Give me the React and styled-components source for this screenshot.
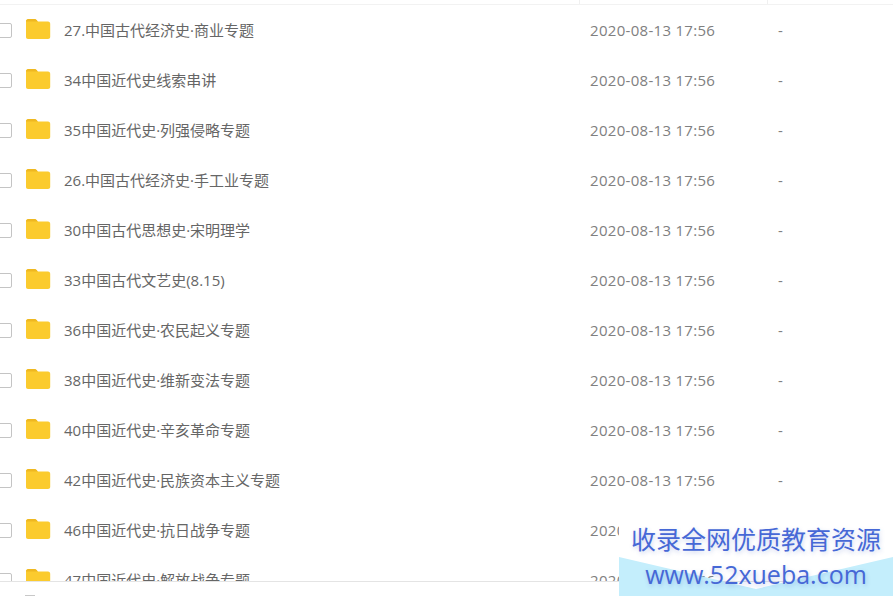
import React from "react";
import styled, { createGlobalStyle } from "styled-components";

const Global = createGlobalStyle`
  html, body { margin: 0; padding: 0; background: #fff; }
  #root { width: 893px; height: 596px; }
`;
const Page = styled.div`
  position: relative;
  width: 893px;
  height: 596px;
  overflow: hidden;
  background: #fff;
  font-family: "Open Sans", "Noto Sans CJK SC", sans-serif;
  font-size: 15px;
  color: #666;
`;
const Header = styled.div`
  height: 4px;
  display: grid;
  grid-template-columns: 580px 188px 1fr;
  border-bottom: 1px solid #f2f2f2;
`;
const HeaderCell = styled.div`
  border-right: 1px solid #f0f0f0;
  &:last-child { border-right: none; }
`;
const Row = styled.div`
  height: 50px;
  display: grid;
  grid-template-columns: 580px 188px 1fr;
  align-items: center;
`;
const NameCell = styled.div`
  display: flex;
  align-items: center;
  margin-left: -3px;
`;
const Check = styled.span`
  box-sizing: border-box;
  flex: none;
  width: 15px;
  height: 15px;
  border: 1px solid #c4c4c4;
  border-radius: 2px;
  background: #fff;
`;
const FolderIcon = styled.svg`
  flex: none;
  width: 26px;
  height: 22px;
  margin: -2px 0 0 13px;
`;
const Name = styled.span`
  margin-left: 13px;
  padding-bottom: 2px;
  color: #666;
  white-space: nowrap;
`;
const DateCell = styled.div`
  padding: 0 0 1px 10px;
  color: #808080;
  letter-spacing: 0.3px;
  white-space: nowrap;
`;
const SizeCell = styled.div`
  padding-left: 10px;
  color: #808080;
`;
const Footer = styled.div`
  position: absolute;
  left: 0;
  right: 0;
  top: 581px;
  bottom: 0;
  background: #fff;
  border-top: 1px solid #e4e4e4;
`;
const FooterMark = styled.span`
  position: absolute;
  left: 25px;
  bottom: 0;
  width: 10px;
  height: 1px;
  background: #c8c8c8;
`;
const Banner = styled.svg`
  position: absolute;
  left: 619px;
  top: 557px;
  width: 274px;
  height: 39px;
`;
const Stamp = styled.div`
  position: absolute;
  left: 619px;
  right: 0;
  top: 519px;
  text-align: center;
  color: #4668d6;
  text-shadow: 1px 2px 4px rgba(60, 90, 190, 0.25);
  font-family: "Noto Sans CJK SC", "Open Sans", sans-serif;
`;
const StampTitle = styled.div`
  font-size: 25px;
  line-height: 38px;
  background: #fff;
`;
const StampUrl = styled.div`
  font-family: "Open Sans", sans-serif;
  font-size: 25px;
  line-height: 34px;
`;

const names = [
  "27.中国古代经济史·商业专题",
  "34中国近代史线索串讲",
  "35中国近代史·列强侵略专题",
  "26.中国古代经济史·手工业专题",
  "30中国古代思想史·宋明理学",
  "33中国古代文艺史(8.15)",
  "36中国近代史·农民起义专题",
  "38中国近代史·维新变法专题",
  "40中国近代史·辛亥革命专题",
  "42中国近代史·民族资本主义专题",
  "46中国近代史·抗日战争专题",
  "47中国近代史·解放战争专题",
];

const Folder = () => (
  <FolderIcon viewBox="0 0 26 22">
    <path d="M1 3.5C1 2 2 1 3.500 1h6c.8 0 1.400.3 2 1l1.400 1.600H23c1.300 0 2.200 1 2.200 2.200V19c0 1.200-1 2-2.200 2H3c-1.200 0-2-.8-2-2Z" fill="#fbcb2e" />
    <path d="M1 3.500C1 2 2 1 3.500 1h6c.8 0 1.400.3 2 1l1.400 1.600H1Z" fill="#efb820" />
  </FolderIcon>
);

export default function App() {
  return (
    <Page>
      <Global />
      <Header>
        <HeaderCell />
        <HeaderCell />
        <HeaderCell />
      </Header>
      {names.map((n) => (
        <Row key={n}>
          <NameCell>
            <Check />
            <Folder />
            <Name>{n}</Name>
          </NameCell>
          <DateCell>2020-08-13 17:56</DateCell>
          <SizeCell>-</SizeCell>
        </Row>
      ))}
      <Footer>
        <FooterMark />
      </Footer>
      <Banner viewBox="0 0 274 39" preserveAspectRatio="none">
        <path d="M0 0 L137 32 L274 0 V39 H0 Z" fill="#c4eefc" />
      </Banner>
      <Stamp>
        <StampTitle>收录全网优质教育资源</StampTitle>
        <StampUrl>www.52xueba.com</StampUrl>
      </Stamp>
    </Page>
  );
}
